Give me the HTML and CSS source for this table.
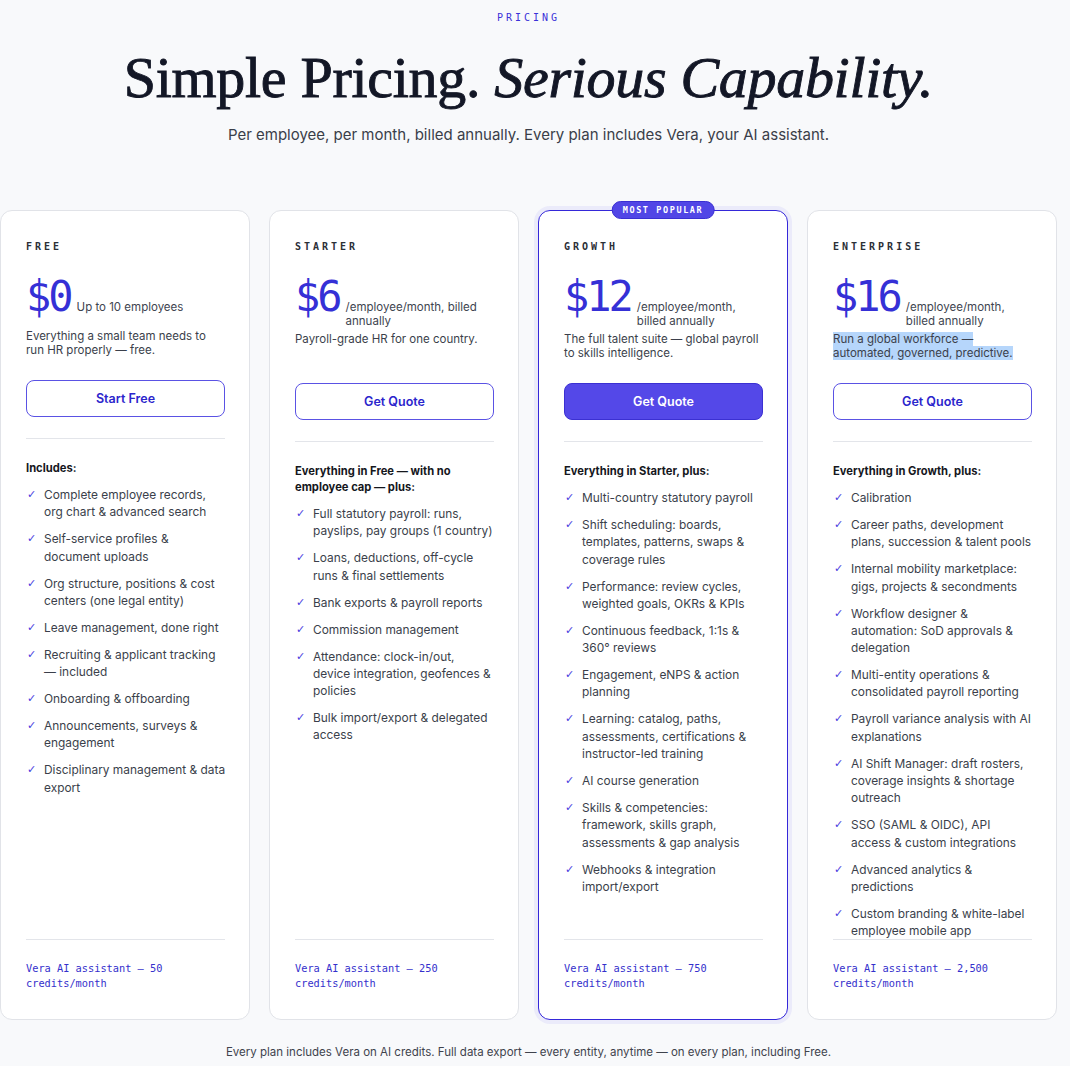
FILE: index.html
```html
<!DOCTYPE html>
<html lang="en">
<head>
<meta charset="utf-8">
<title>Pricing</title>
<link rel="stylesheet" href="styles.css">
</head>
<body>
<div class="page">
  <header class="hero">
    <div class="eyebrow">PRICING</div>
    <h1 class="title">Simple Pricing. <em>Serious Capability.</em></h1>
    <p class="subtitle">Per employee, per month, billed annually. Every plan includes Vera, your AI assistant.</p>
  </header>

  <section class="plans">
    <article class="card">
      <div class="plan-name">FREE</div>
      <div class="price-row"><span class="price">$0</span><span class="unit">Up to 10 employees</span></div>
      <p class="desc">Everything a small team needs to run HR properly — free.</p>
      <a class="btn">Start Free</a>
      <hr class="rule">
      <div class="includes">Includes:</div>
      <ul class="features">
        <li>Complete employee records,<br>org chart &amp; advanced search</li>
        <li>Self-service profiles &amp;<br>document uploads</li>
        <li>Org structure, positions &amp; cost<br>centers (one legal entity)</li>
        <li>Leave management, done right</li>
        <li>Recruiting &amp; applicant tracking<br>— included</li>
        <li>Onboarding &amp; offboarding</li>
        <li>Announcements, surveys &amp;<br>engagement</li>
        <li>Disciplinary management &amp; data<br>export</li>
      </ul>
      <div class="card-foot">Vera AI assistant — 50 credits/month</div>
    </article>

    <article class="card">
      <div class="plan-name">STARTER</div>
      <div class="price-row"><span class="price">$6</span><span class="unit">/employee/month, billed annually</span></div>
      <p class="desc">Payroll-grade HR for one country.</p>
      <a class="btn">Get Quote</a>
      <hr class="rule">
      <div class="includes">Everything in Free — with no<br>employee cap — plus:</div>
      <ul class="features">
        <li>Full statutory payroll: runs,<br>payslips, pay groups (1 country)</li>
        <li>Loans, deductions, off-cycle<br>runs &amp; final settlements</li>
        <li>Bank exports &amp; payroll reports</li>
        <li>Commission management</li>
        <li>Attendance: clock-in/out,<br>device integration, geofences &amp;<br>policies</li>
        <li>Bulk import/export &amp; delegated<br>access</li>
      </ul>
      <div class="card-foot">Vera AI assistant — 250 credits/month</div>
    </article>

    <article class="card card-featured">
      <span class="badge">MOST POPULAR</span>
      <div class="plan-name">GROWTH</div>
      <div class="price-row"><span class="price">$12</span><span class="unit">/employee/month, billed annually</span></div>
      <p class="desc">The full talent suite — global payroll to skills intelligence.</p>
      <a class="btn btn-primary">Get Quote</a>
      <hr class="rule">
      <div class="includes">Everything in Starter, plus:</div>
      <ul class="features">
        <li>Multi-country statutory payroll</li>
        <li>Shift scheduling: boards,<br>templates, patterns, swaps &amp;<br>coverage rules</li>
        <li>Performance: review cycles,<br>weighted goals, OKRs &amp; KPIs</li>
        <li>Continuous feedback, 1:1s &amp;<br>360° reviews</li>
        <li>Engagement, eNPS &amp; action<br>planning</li>
        <li>Learning: catalog, paths,<br>assessments, certifications &amp;<br>instructor-led training</li>
        <li>AI course generation</li>
        <li>Skills &amp; competencies:<br>framework, skills graph,<br>assessments &amp; gap analysis</li>
        <li>Webhooks &amp; integration<br>import/export</li>
      </ul>
      <div class="card-foot">Vera AI assistant — 750 credits/month</div>
    </article>

    <article class="card">
      <div class="plan-name">ENTERPRISE</div>
      <div class="price-row"><span class="price">$16</span><span class="unit">/employee/month, billed annually</span></div>
      <p class="desc"><span class="selected">Run a global workforce — automated, governed, predictive.</span></p>
      <a class="btn">Get Quote</a>
      <hr class="rule">
      <div class="includes">Everything in Growth, plus:</div>
      <ul class="features">
        <li>Calibration</li>
        <li>Career paths, development<br>plans, succession &amp; talent pools</li>
        <li>Internal mobility marketplace:<br>gigs, projects &amp; secondments</li>
        <li>Workflow designer &amp;<br>automation: SoD approvals &amp;<br>delegation</li>
        <li>Multi-entity operations &amp;<br>consolidated payroll reporting</li>
        <li>Payroll variance analysis with AI<br>explanations</li>
        <li>AI Shift Manager: draft rosters,<br>coverage insights &amp; shortage<br>outreach</li>
        <li>SSO (SAML &amp; OIDC), API<br>access &amp; custom integrations</li>
        <li>Advanced analytics &amp;<br>predictions</li>
        <li>Custom branding &amp; white-label<br>employee mobile app</li>
      </ul>
      <div class="card-foot">Vera AI assistant — 2,500 credits/month</div>
    </article>
  </section>

  <p class="note">Every plan includes Vera on AI credits. Full data export — every entity, anytime — on every plan, including Free.</p>
</div>
</body>
</html>
```

FILE: styles.css
```css
* { box-sizing: border-box; }
html, body { margin: 0; padding: 0; }
body {
  background: #f8f9fb;
  font-family: Inter, "Noto Sans", sans-serif;
  color: #3b3f4b;
}
.page {
  width: 1057px;
  padding-top: 12px;
}
.hero { text-align: center; }
.eyebrow {
  font-family: "DejaVu Sans Mono", "Liberation Mono", monospace;
  font-size: 10px;
  letter-spacing: 3px;
  color: #3a32d8;
  line-height: 12px;
}
.title {
  margin: 22px 0 0;
  font-family: "Liberation Serif", "Times New Roman", serif;
  font-weight: 400;
  font-size: 58px;
  line-height: 64px;
  color: #131726;
  letter-spacing: -0.3px;
  -webkit-text-stroke: 0.9px #131726;
}
.title em { font-style: italic; }
.subtitle {
  margin: 15px 0 0;
  font-size: 15px;
  line-height: 20px;
  color: #3a3e49;
}
.plans {
  margin-top: 65px;
  display: grid;
  grid-template-columns: repeat(4, 250px);
  column-gap: 19px;
}
.card {
  position: relative;
  display: flex;
  flex-direction: column;
  background: #fff;
  border: 1px solid #e1e3e8;
  border-radius: 12px;
  padding: 30px 24px 0 25px;
}
.card-featured {
  border: 1.5px solid #3528d9;
  box-shadow: 0 0 0 4px rgba(88, 80, 236, 0.08);
}
.badge {
  position: absolute;
  top: -10px;
  left: 50%;
  transform: translateX(-50%);
  background: #5146e6;
  border: 1px solid #3a2fd2;
  color: #fff;
  font-family: "DejaVu Sans Mono", "Liberation Mono", monospace;
  font-weight: 700;
  font-size: 8.5px;
  letter-spacing: 1.6px;
  line-height: 16px;
  padding: 0 10px;
  border-radius: 9px;
  white-space: nowrap;
}
.plan-name {
  font-family: "DejaVu Sans Mono", "Liberation Mono", monospace;
  font-weight: 700;
  font-size: 10px;
  letter-spacing: 3px;
  line-height: 12px;
  color: #2c2f37;
}
.price-row {
  display: flex;
  align-items: baseline;
  gap: 6px;
  margin-top: 16px;
}
.price {
  font-family: "DejaVu Sans Mono", "Liberation Mono", monospace;
  font-size: 42px;
  letter-spacing: -3px;
  line-height: 56px;
  color: #3530d6;
  flex: none;
}
.unit {
  font-size: 11.5px;
  line-height: 14px;
  color: #40444f;
}
.desc {
  margin: 4px 0 0;
  font-size: 11.5px;
  line-height: 14px;
  min-height: 28px;
  color: #3b3f4b;
}
.selected { background: #b6d6fb; }
.btn {
  display: block;
  margin-top: 23px;
  height: 37px;
  line-height: 35px;
  text-align: center;
  border: 1px solid #5a52e4;
  border-radius: 8px;
  font-size: 12.5px;
  font-weight: 600;
  color: #2b25cc;
  background: #fff;
}
.btn-primary {
  background: #5448e8;
  border-color: #3b30d2;
  color: #fff;
}
.rule {
  border: 0;
  border-top: 1px solid #e3e5ea;
  margin: 21px 0 0;
  height: 0;
}
.includes {
  margin-top: 21px;
  font-size: 11.2px;
  font-weight: 700;
  line-height: 16px;
  color: #15171d;
  white-space: nowrap;
}
.features {
  list-style: none;
  margin: 10px 0 0;
  padding: 0;
  display: flex;
  flex-direction: column;
  gap: 9.7px;
}
.features li {
  position: relative;
  padding-left: 18px;
  font-size: 11.9px;
  line-height: 17.3px;
  color: #3b3f4b;
  white-space: nowrap;
}
.features li::before {
  content: "✓";
  position: absolute;
  left: 1px;
  top: 0;
  font-family: "DejaVu Sans", sans-serif;
  font-size: 11px;
  color: #4a40e0;
}
.card-foot {
  margin-top: auto;
  border-top: 1px solid #e3e5ea;
  padding: 21px 0 28px;
  font-family: "DejaVu Sans Mono", "Liberation Mono", monospace;
  font-size: 10.3px;
  line-height: 15px;
  color: #3430cc;
}
.note {
  margin: 24px 0 0;
  text-align: center;
  font-size: 11.5px;
  line-height: 16px;
  color: #3f434d;
}
```
